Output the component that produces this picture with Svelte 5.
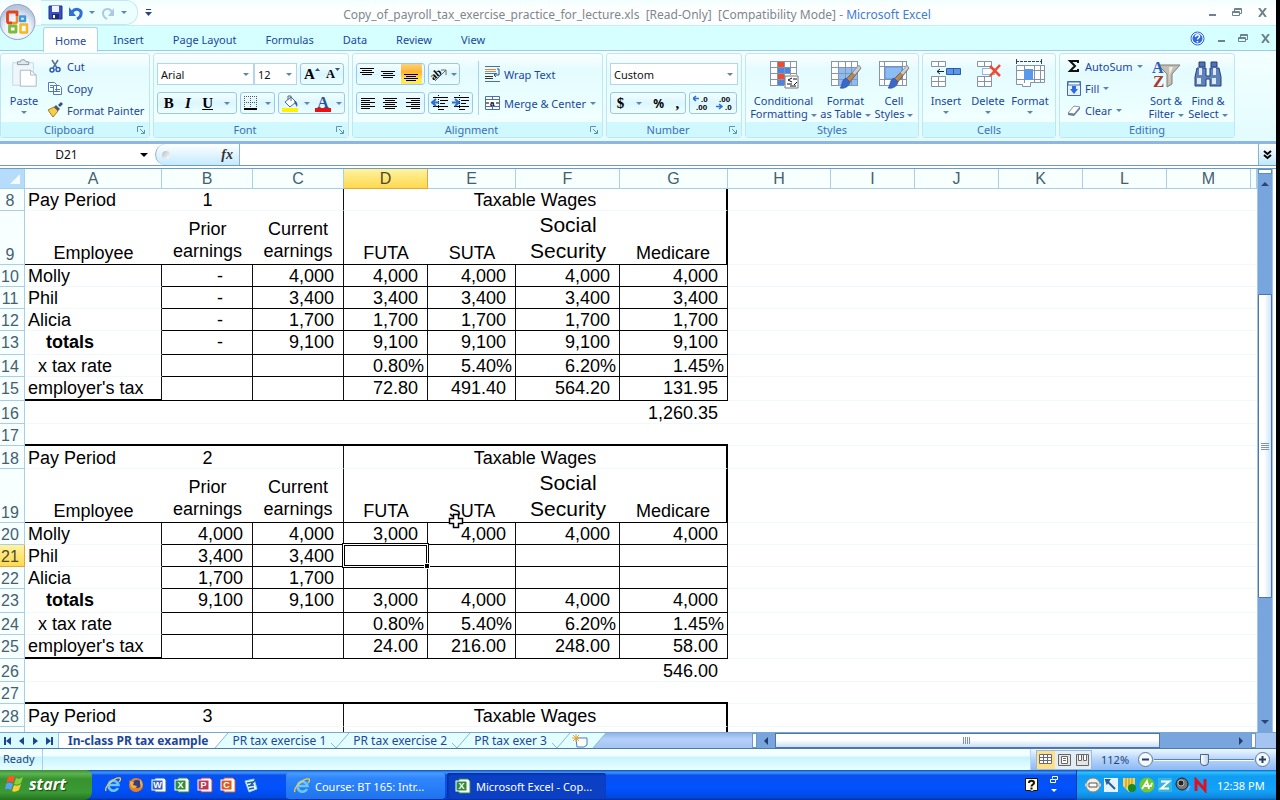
<script>
    let tabs = ["Home", "Insert", "Page Layout", "Formulas", "Data", "Review", "View"];
    let columns = ["A", "B", "C", "D", "E", "F", "G", "H", "I", "J", "K", "L", "M"];
    let sheets = ["PR tax exercise 1", "PR tax exercise 2", "PR tax exer 3"];
    let blank = ["", "", "", "", "", ""];

    let activeTab = "Home";
    let nameBox = "D21";
    let formula = "";
    let zoom = 50;

    // body rows of one pay period: label, style of the label, row height, B..G
    let period = (start, number, rows) => [
        { n: start, kind: "title", h: start === 8 ? 22 : 23, number },
        { n: start + 1, kind: "heads", h: 54 },
        ...rows.map((cells, i) => ({
            n: start + 2 + i,
            kind: "body",
            h: [22, 22, 22, 24, 22, 24][i],
            label: ["Molly", "Phil", "Alicia", "totals", "x tax rate", "employer's tax"][i],
            cls: ["", "", "", "totals", "rate", "last"][i],
            cells
        }))
    ];

    let rows = [
        ...period(8, "1", [
            ["-", "4,000", "4,000", "4,000", "4,000", "4,000"],
            ["-", "3,400", "3,400", "3,400", "3,400", "3,400"],
            ["-", "1,700", "1,700", "1,700", "1,700", "1,700"],
            ["-", "9,100", "9,100", "9,100", "9,100", "9,100"],
            ["", "", "0.80%", "5.40%", "6.20%", "1.45%"],
            ["", "", "72.80", "491.40", "564.20", "131.95"]
        ]),
        { n: 16, kind: "sum", h: 23, sum: "1,260.35" },
        { n: 17, kind: "gap", h: 22 },
        ...period(18, "2", [
            ["4,000", "4,000", "3,000", "4,000", "4,000", "4,000"],
            ["3,400", "3,400", "", "", "", ""],
            ["1,700", "1,700", "", "", "", ""],
            ["9,100", "9,100", "3,000", "4,000", "4,000", "4,000"],
            ["", "", "0.80%", "5.40%", "6.20%", "1.45%"],
            ["", "", "24.00", "216.00", "248.00", "58.00"]
        ]),
        { n: 26, kind: "sum", h: 23, sum: "546.00" },
        { n: 27, kind: "gap", h: 22 },
        { n: 28, kind: "title", h: 23, number: "3" },
        { n: "", kind: "rest", h: 54 }
    ];
</script>

<style>
    :global(body) {
        background: #000;
        overflow: hidden;
    }

    .screen {
        display: flex;
        flex-direction: column;
        height: 100vh;
        margin-right: 4px;
        background: #fff;
        font-family: "Noto Sans", "Open Sans", sans-serif;
        font-size: 11px;
        color: #1b479c;
        white-space: nowrap;
    }

    button, input, select {
        font: inherit;
        color: inherit;
        background: none;
        border: 0;
        padding: 0;
        margin: 0;
        min-width: 0;
        outline: 0;
        appearance: none;
    }

    svg {
        display: block;
        flex: none;
    }

    .dd {
        display: inline-block;
        flex: none;
        width: 0;
        border: 3px solid transparent;
        border-top-color: #5c85b3;
        border-bottom: 0;
    }

    /* title bar */
    .titlebar {
        display: flex;
        align-items: center;
        height: 25px;
        background: linear-gradient(#f2ffff, #fff 40%, #fbffff);
        border-bottom: 1px solid #c9ecf5;
    }

    .orb {
        position: absolute;
        left: 0;
        top: 3px;
        z-index: 2;
    }

    .quick {
        display: flex;
        align-items: center;
        gap: 6px;
        width: 89px;
        height: 23px;
        margin-left: 41px;
        padding-left: 7px;
        border: 1px solid #c3e8f4;
        border-left: 0;
        border-radius: 0 12px 12px 0;
        background: #ecffff;
    }

    .more {
        margin-left: 7px;
    }

    .title {
        flex: 1;
        text-align: center;
        color: #80868e;
        font-size: 12px;
        white-space: pre;
        padding: 4px 86px 0 0;
    }

    .title span {
        color: #3f7cd2;
    }

    .winbtns {
        display: flex;
        align-items: center;
        gap: 15px;
        padding-right: 8px;
    }

    /* ribbon */
    .tabs {
        display: flex;
        align-items: stretch;
        height: 25px;
        padding-left: 43px;
        background: #d6ffff;
        border-bottom: 1px solid #9fc9ea;
        box-sizing: border-box;
    }

    .tabs button {
        padding: 2px 14px 0 15px;
        height: 25px;
    }

    .tabs button.active {
        position: relative;
        top: 1px;
        padding: 0 11px;
        background: #fff;
        border: 1px solid #a8d4ee;
        border-bottom: 0;
        border-radius: 3px 3px 0 0;
    }

    .tabs .winbtns {
        margin-left: auto;
        padding-right: 5px;
        gap: 12px;
    }

    .tabs .winbtns button {
        padding: 0;
        height: auto;
    }

    .ribbon {
        display: flex;
        gap: 3px;
        padding: 2px 0 3px;
        background: linear-gradient(#f3ffff, #e3fcff);
        border-bottom: 3px solid #8fb6e0;
    }

    .group {
        display: flex;
        flex-direction: column;
        width: var(--w);
        height: 85px;
        box-sizing: border-box;
        border: 1px solid #bfe6f3;
        border-radius: 3px;
        background: linear-gradient(#fafeff, #e4fbff 20%, #eaffff 60%, #fafeff);
    }

    .group .body {
        flex: 1;
        display: flex;
    }

    .group > .rows {
        flex: 1;
    }

    .group footer {
        display: flex;
        align-items: center;
        height: 15px;
        color: #3e6fb5;
        background: #cff8ff;
    }

    .group footer span {
        flex: 1;
        text-align: center;
    }

    .group footer svg {
        margin-right: 4px;
    }

    .small {
        display: flex;
        flex-direction: column;
        gap: 6px;
        padding-top: 4px;
    }

    .small button, .inline {
        display: flex;
        align-items: center;
        gap: 4px;
        height: 16px;
    }

    .small.tools {
        width: 78px;
        padding-left: 7px;
    }

    .line .inline {
        height: 22px;
    }

    .big {
        display: flex;
        flex-direction: column;
        align-items: center;
        line-height: 13px;
        padding-top: 5px;
        width: var(--w);
    }

    .big svg {
        margin-bottom: 5px;
        height: 30px;
    }

    .big .dd {
        margin-left: 3px;
        vertical-align: middle;
    }

    .big > .dd {
        margin: 4px 0 0;
    }

    .rows {
        display: flex;
        flex-direction: column;
        gap: 7px;
        padding: 9px 3px 0;
    }

    .line {
        display: flex;
        gap: 3px;
        height: 22px;
    }

    .set {
        display: flex;
        align-items: center;
        justify-content: space-around;
        box-sizing: border-box;
        width: var(--w);
        border: 1px solid #9fc6e8;
        border-radius: 3px;
        background: linear-gradient(#f2ffff, #dcf6ff 50%, #ecffff);
    }

    .set button {
        display: flex;
        align-items: center;
        justify-content: center;
        height: 20px;
    }

    .set .on {
        width: 21px;
        background: linear-gradient(#fbd27a, #ffb42e 40%, #ffea55 80%);
    }

    .serif {
        font-family: "Liberation Serif", serif;
        font-weight: bold;
        font-size: 15px;
        color: #000;
    }

    .plain {
        font-family: "Noto Sans", sans-serif;
        font-size: 12px;
    }

    .combo {
        display: flex;
        align-items: center;
        box-sizing: border-box;
        width: var(--w);
        padding: 0 4px 0 3px;
        border: 1px solid #b4d6ec;
        background: #fff;
        color: #111;
    }

    .combo select {
        flex: 1;
    }

    .tight {
        gap: 0;
    }

    .sep {
        width: 1px;
        height: 54px;
        margin: 7px 3px 0 2px;
        background: #b0cfe8;
    }

    /* formula bar */
    .formula {
        display: flex;
        height: 21px;
        color: #111;
        font-size: 12px;
        border-bottom: 1px solid #6d9cc7;
        margin-bottom: 2px;
    }

    .formula .name {
        width: 133px;
        text-align: center;
    }

    .formula .drop {
        width: 22px;
        display: flex;
        justify-content: center;
        align-items: center;
    }

    .formula .drop i {
        border: 4px solid transparent;
        border-top-color: #000;
        border-bottom: 0;
    }

    .fx {
        display: flex;
        align-items: center;
        justify-content: space-between;
        width: 85px;
        box-sizing: border-box;
        padding: 0 6px;
        border: 1px solid #86b2d8;
        border-radius: 11px 0 0 11px;
        border-width: 0 1px 0 1px;
        background: linear-gradient(#fff, #c3eaff);
        font: italic bold 14px "Liberation Serif", serif;
        color: #333;
    }

    .fx i {
        width: 8px;
        height: 8px;
        border-radius: 4px;
        background: linear-gradient(135deg, #b8bec4, #fff);
    }

    .formula .value {
        flex: 1;
        padding: 0 4px;
    }

    .expand {
        width: 18px;
        display: flex;
        align-items: center;
        justify-content: center;
        border-left: 1px solid #86b2d8;
        background: linear-gradient(#fff, #bfe9fb);
    }

    /* sheet */
    .work {
        flex: 1;
        min-height: 0;
        display: flex;
        border-top: 1px solid #6d9cc7;
    }

    .sheet {
        flex: 1;
        overflow: hidden;
    }

    table {
        width: 100%;
        table-layout: fixed;
        border-collapse: separate;
        border-spacing: 0;
        font: 18px/20px "Liberation Sans", Arial, sans-serif;
        color: #000;
    }

    .c-n { width: 25px; }
    .c-A { width: 137px; }
    .c-B, .c-C { width: 91px; }
    .c-D, .c-I, .c-J, .c-K, .c-L, .c-M { width: 84px; }
    .c-E { width: 88px; }
    .c-F { width: 104px; }
    .c-G { width: 108px; }
    .c-H { width: 103px; }

    tr {
        height: var(--h);
    }

    th {
        padding: 0;
        box-sizing: border-box;
        border-right: 1px solid #a9cfe4;
        border-bottom: 1px solid #a9cfe4;
        font-size: 16px;
        font-weight: normal;
        color: #44606f;
        background: #f7ffff;
    }

    thead tr {
        height: 20px;
    }

    thead th {
        line-height: 19px;
    }

    tbody th {
        vertical-align: bottom;
        padding-right: 4px;
        line-height: 19px;
    }

    th.sel {
        background: linear-gradient(#fff3a0, #ffd94f);
        border-color: #e0a83c;
        color: #4d4a2c;
    }

    th.corner {
        background: #b5dcfa;
    }

    th.corner svg {
        margin-left: 9px;
    }

    td {
        position: relative;
        box-sizing: border-box;
        padding: 0;
        border: 0 solid #111;
        border-bottom: 1px solid #f1f9fc;
        vertical-align: bottom;
        text-align: right;
    }

    td.a {
        text-align: left;
        padding-left: 3px;
    }

    td.mid {
        text-align: center;
        padding-left: 0;
    }

    td.cut, .body-row td.a, td.box {
        border-right-width: 1px;
    }

    td.box {
        padding-right: 9px;
        border-bottom-color: #000;
    }

    .rate td.box {
        padding-right: 3px;
    }

    td.dash {
        padding-right: 29px;
    }

    td.edge {
        border-right: 2px solid #000;
    }

    td.under {
        border-bottom-color: #000;
        padding-bottom: 1px;
    }

    td.lift {
        padding-bottom: 2px;
        line-height: 22px;
    }

    td.large {
        font-size: 21px;
        line-height: 26px;
        padding-bottom: 0;
    }

    .totals td.a {
        font-weight: bold;
        padding-left: 21px;
    }

    .totals td, .last td, .totals th, .last th {
        padding-bottom: 2px;
    }

    .rate td.a {
        padding-left: 13px;
    }

    td.thick, .last td.a {
        border-bottom: 2px solid #000;
    }

    .last td.a {
        padding-bottom: 1px;
    }

    td.sum {
        padding-right: 10px;
    }

    .cursor-cell {
        position: absolute;
        left: -2px;
        top: -2px;
        right: -2px;
        bottom: -2px;
        z-index: 1;
        border: 3px double #000;
        background: #fff;
    }

    .cursor-cell::after {
        content: "";
        position: absolute;
        right: -4px;
        bottom: -4px;
        width: 4px;
        height: 4px;
        background: #000;
        border: 1px solid #fff;
    }

    .pointer {
        position: absolute;
        left: 20px;
        top: -10px;
        z-index: 1;
    }

    .vscroll {
        display: flex;
        flex-direction: column;
        align-items: center;
        width: 14px;
        margin-right: 3px;
        border: solid #9dc8ea;
        border-width: 0 1px;
        background: #79a5de;
    }

    .split {
        width: 12px;
        height: 3px;
        border: 1px solid #5d8fc4;
        background: #fff;
    }

    .vthumb {
        width: 12px;
        height: 302px;
        margin-top: 108px;
        border: 1px solid #4f74a8;
        border-radius: 1px;
        background: linear-gradient(90deg, #fff 40%, #cfe6fa);
        display: flex;
        align-items: center;
        justify-content: center;
    }

    .up, .down {
        border: 4px solid transparent;
    }

    .up {
        border-bottom-color: #2b4673;
        border-top: 0;
        margin-top: 8px;
    }

    .down {
        border-top-color: #2b4673;
        border-bottom: 0;
        margin: auto 0 8px;
    }

    /* sheet tabs */
    .sheets {
        display: flex;
        height: 15px;
        line-height: 15px;
        font-size: 12px;
        border-top: 1px solid #7ba6d0;
        border-bottom: 1px solid #4f79ab;
        background: linear-gradient(#8db4ea, #b5d0fa 40%, #a5c4f1);
    }

    .nav {
        display: flex;
        align-items: center;
        justify-content: space-around;
        width: 58px;
        background: #d9fbff;
        border-right: 1px solid #9cc5e3;
    }

    .sheets > button {
        background: #e2feff;
        height: 15px;
    }

    .sheets .current {
        padding: 0 7px 0 9px;
        background: #fff;
        font-weight: bold;
    }

    .slant {
        background: #e2feff;
    }

    .hscroll {
        flex: 1;
        display: flex;
        align-items: center;
        margin-left: auto;
        max-width: 524px;
        background: #79a5de;
    }

    .grip {
        width: 3px;
        height: 13px;
        border: 1px solid #6b98c8;
        background: #fff;
    }

    .left, .right {
        border: 4px solid transparent;
    }

    .left {
        border-right-color: #243d68;
        border-left: 0;
        margin: 0 7px;
    }

    .right {
        border-left-color: #243d68;
        border-right: 0;
        margin: 0 8px 0 auto;
    }

    .hthumb {
        display: flex;
        align-items: center;
        justify-content: center;
        width: 73%;
        height: 13px;
        border: 1px solid #4f74a8;
        background: linear-gradient(#fff 45%, #c9dff5);
    }

    .end {
        width: 20px;
        height: 15px;
        background: #a5c4f1;
    }

    /* status bar */
    .status {
        display: flex;
        height: 21px;
        line-height: 20px;
        color: #23457c;
        background: linear-gradient(#f4ffff, #f4ffff 30%, #c8f4ff 40%, #e8ffff);
    }

    .ready {
        width: 39px;
        padding-left: 3px;
        border-right: 1px solid #a9d0e6;
    }

    .zoombar {
        display: flex;
        align-items: center;
        width: 246px;
        margin-left: auto;
        box-sizing: border-box;
        padding: 0 5px;
        border-left: 1px solid #b7d6ee;
        background: linear-gradient(#eef8ff, #b3d3fb 50%, #8eb9f2);
    }

    .views {
        display: flex;
        height: 18px;
        border: 1px solid #9dbbd8;
        background: #e3edf5;
        margin-right: 9px;
    }

    .views button {
        display: flex;
        align-items: center;
        justify-content: center;
        width: 18px;
    }

    .views .on {
        background: #ffe08a;
    }

    .percent {
        width: 36px;
        text-align: left;
    }

    .slider {
        flex: 1;
        height: 16px;
    }

    .slider::-webkit-slider-runnable-track {
        height: 2px;
        background: linear-gradient(#5b83b5 50%, #fff 50%);
    }

    .slider::-webkit-slider-thumb {
        appearance: none;
        width: 9px;
        height: 12px;
        margin-top: -5px;
        border: 1px solid #47678f;
        border-radius: 1px 1px 5px 5px;
        background: linear-gradient(90deg, #fff, #bcd2ea);
    }

    /* taskbar */
    .taskbar {
        display: flex;
        align-items: stretch;
        height: 30px;
        background: linear-gradient(#1450b8, #3a93ff 8%, #0a50ee 18%, #0052ff 60%, #0048e0 92%, #0a2c9c);
        color: #fff;
    }

    .start {
        display: flex;
        align-items: center;
        gap: 4px;
        width: 92px;
        padding: 0 0 2px 5px;
        border-radius: 0 6px 8px 0;
        background: linear-gradient(#3f8a3c, #5cb550 12%, #37932f 30%, #3a9a34 75%, #23711f);
        font: italic bold 16px/22px "Open Sans", sans-serif;
        text-shadow: 1px 1px 1px #134a10;
    }

    .launch {
        display: flex;
        align-items: center;
        gap: 7px;
        width: 181px;
        padding-left: 13px;
    }

    .task {
        display: flex;
        align-items: center;
        gap: 5px;
        width: 159px;
        height: 26px;
        box-sizing: border-box;
        margin: 3px 2px 0 0;
        padding-left: 8px;
        border-radius: 3px;
        background: linear-gradient(#4a9cff, #2f86fb 20%, #1f74ee);
    }

    .task.pressed {
        background: #0b3fc4;
        box-shadow: inset 1px 1px 2px #062886;
    }

    .help {
        display: flex;
        align-items: center;
        gap: 10px;
        margin-left: auto;
        padding-right: 17px;
    }

    .tray {
        display: flex;
        align-items: center;
        gap: 2px;
        width: 200px;
        box-sizing: border-box;
        padding-left: 8px;
        border-left: 1px solid #0a3a9c;
        background: linear-gradient(#0d66c8, #2fc0ff 8%, #109cf3 20%, #12a2f8 70%, #0f86dc 92%, #0b5fae);
    }

    .tray time {
        margin-left: 6px;
    }
</style>

{#snippet launcher()}
    <svg width="8" height="8" viewBox="0 0 8 8" fill="none" stroke="#5e8fb8"><path d="M.5 6V.5H6M3 3l4 4M7.500 4v3.500H4" /></svg>
{/snippet}

{#snippet windowButtons()}
    <button aria-label="Minimize"><svg width="9" height="9"><rect x="1" y="6" width="7" height="2" fill="#6f8090" /></svg></button>
    <button aria-label="Restore"><svg width="11" height="9" fill="none" stroke="#6f8090"><path d="M2.500 3V.5h7v5H8M2.500 1.500h7" /><path d="M.5 3.500h7v4h-7zM.5 4.500h7" /></svg></button>
    <button aria-label="Close"><svg width="10" height="9" stroke="#6f8090" stroke-width="2"><path d="M1 0l7 9M8 0L1 9" /></svg></button>
{/snippet}

{#snippet lines(list, top = 4)}
    <svg width="16" height="17" stroke="#000">
        {#each list as [x, w], i}
            <path d="M{x} {top + i * 2 + 0.5}h{w}" />
        {/each}
    </svg>
{/snippet}

{#snippet indent(dir)}
    <svg width="18" height="16" stroke="#000" fill="none">
        <path d="M2 2.500h15M9 5.500h8M9 8.500h5M2 11.500h15M8 14.500h5" />
        <path d="M7.500 0v16" stroke-dasharray="1 1" />
        {#if dir === "out"}
            <path d="M8 7.500H2M5 4L1 7.500 5 11" stroke="#2e6fd0" stroke-width="2" />
        {:else}
            <path d="M0 7.500h6M3 4l4 3.500L3 11" stroke="#2e6fd0" stroke-width="2" />
        {/if}
    </svg>
{/snippet}

{#snippet brush()}
    <path d="M30 7l2 2-11 14-4-3z" fill="#b98756" stroke="#5f4a3a" stroke-width=".7" />
    <path d="M30 6l2 3-6 7-3-2z" fill="#c9cdd2" stroke="#666" stroke-width=".5" />
    <path d="M17 19l4 4c-1 5-6 7-10 6 3-3 1-8 6-10z" fill="#3a68c8" stroke="#244a94" stroke-width=".6" />
{/snippet}

{#snippet ie()}
    <svg width="16" height="16" viewBox="0 0 16 16" fill="none">
        <path d="M13 11a5 5 0 1 1 .5-3H4" stroke="#6cc5ff" stroke-width="2.600" />
        <path d="M1 14C-1 10 9 0 15 1c1 1 0 3-1 4" stroke="#f5cf3c" stroke-width="1.300" />
    </svg>
{/snippet}

{#snippet office(letter, color)}
    <svg width="16" height="16" viewBox="0 0 16 16">
        <path d="M4 1h9l2 2v12H4z" fill="#fff" stroke={color} />
        <rect x="1" y="3" width="11" height="10" fill={color} stroke="#fff" />
        <text x="6.500" y="11" text-anchor="middle" font-size="9" font-weight="bold" font-family="Liberation Sans" fill="#fff">{letter}</text>
    </svg>
{/snippet}

<div class="screen">
    <header class="titlebar">
        <svg class="orb" width="37" height="38" viewBox="0 0 37 38">
            <defs>
                <radialGradient id="orb" cx=".5" cy=".7" r=".6"><stop offset="0" stop-color="#fff" /><stop offset=".6" stop-color="#eaf2fa" /><stop offset="1" stop-color="#b9c6dc" /></radialGradient>
            </defs>
            <circle cx="17.500" cy="19" r="17.500" fill="url(#orb)" stroke="#8fa3c8" />
            <g fill="none" stroke-linejoin="round">
                <path d="M17 13V9H8.500l-1 1v9l1 1H12" stroke="#e2431d" stroke-width="2.800" />
                <path d="M12 20h4l1-1v-6" stroke="#f58a2c" stroke-width="2.500" />
                <path d="M20 18v-4.500h5V18z" stroke="#3e9ade" stroke-width="2.500" />
                <path d="M16 23H9.500v6H16z" stroke="#7dbb3a" stroke-width="2.800" />
                <path d="M20.500 21.500v8h6.500v-8z" stroke="#f5b81f" stroke-width="2.500" />
            </g>
        </svg>
        <div class="quick">
            <button aria-label="Save"><svg width="15" height="15"><path d="M1 1h13v13H1z" fill="#3a4fc0" stroke="#26318c" /><path d="M4 1h7v6H4z" fill="#eef4ff" /><path d="M4 9h7v5H4z" fill="#1f2c70" /><path d="M5 10h2v3H5z" fill="#fff" /></svg></button>
            <button aria-label="Undo"><svg width="14" height="14" fill="none"><path d="M3 6c4-5 10-2 9 2 0 2-2 4-4 5" stroke="#2f6fd8" stroke-width="3" /><path d="M0 1v9h7z" fill="#2f6fd8" /></svg></button>
            <i class="dd"></i>
            <button aria-label="Redo"><svg width="14" height="14" fill="none"><path d="M11 6C8 1 2 3 2 7c0 3 2 5 4 6" stroke="#aac9e4" stroke-width="2" /><path d="M13 2v8H7z" fill="#aac9e4" /></svg></button>
            <i class="dd"></i>
        </div>
        <svg class="more" width="7" height="8" fill="#26467e"><path d="M1 0h5v1H1zM0 3h7L3.500 7z" /></svg>
        <div class="title">Copy_of_payroll_tax_exercise_practice_for_lecture.xls  [Read-Only]  [Compatibility Mode] - <span>Microsoft Excel</span></div>
        <div class="winbtns">{@render windowButtons()}</div>
    </header>

    <nav class="tabs">
        {#each tabs as tab}
            <button class:active={tab === activeTab} on:click={() => activeTab = tab}>{tab}</button>
        {/each}
        <div class="winbtns">
            <button aria-label="Help"><svg width="15" height="15"><circle cx="7.500" cy="7.500" r="6.500" fill="#fff" stroke="#2d62c8" /><circle cx="7.500" cy="7.500" r="5" fill="#2d6be0" /><path d="M5.500 6c0-3 4-3 4-.5 0 1.500-2 1.500-2 3M7.500 10v1.500" stroke="#fff" stroke-width="1.500" fill="none" /></svg></button>
            {@render windowButtons()}
        </div>
    </nav>

    <div class="ribbon">
        <section class="group" style="--w: 150px">
            <div class="body">
                <button class="big" style="--w: 46px">
                    <svg width="30" viewBox="0 0 30 32"><path d="M3 4h22v24H3z" fill="#eff7fb" stroke="#c5d8e4" /><path d="M8 6V3h3c0-3 6-3 6 0h3v3z" fill="#e3e8ee" stroke="#8896a8" /><path d="M11 12h11l6 5v12H11z" fill="#fff" stroke="#a4b8cc" /><path d="M22 12v5h6" fill="none" stroke="#a4b8cc" /></svg>
                    <span>Paste</span><i class="dd"></i>
                </button>
                <div class="small">
                    <button><svg width="16" height="16" fill="none" stroke="#2c5cb4" stroke-width="1.500"><path d="M5 2l5 8M11 2L6 10" stroke="#56718f" /><circle cx="5" cy="12" r="2" /><circle cx="11" cy="11.500" r="2" /></svg>Cut</button>
                    <button><svg width="16" height="16" fill="#fff" stroke="#4a7cc0"><path d="M1.500 2.500h6l2 2v7h-8zM6.500 5.500h6l2 2v7h-8z" /><path d="M3 5.500h3M3 7.500h3M8 9.500h5M8 11.500h5" /></svg>Copy</button>
                    <button><svg width="16" height="16"><path d="M1 8l6-3 4 4-5 6z" fill="#f5cf4c" stroke="#a67c1c" /><path d="M7 5l2-2 4 4-2 2z" fill="#4a5a74" /><path d="M11 3l3-3 2 2-3 3z" fill="#344b90" /></svg>Format Painter</button>
                </div>
            </div>
            <footer><span>Clipboard</span>{@render launcher()}</footer>
        </section>

        <section class="group" style="--w: 196px">
            <div class="rows">
                <div class="line">
                    <div class="line tight">
                        <label class="combo" style="--w: 97px"><select aria-label="Font"><option>Arial</option></select><i class="dd"></i></label>
                        <label class="combo" style="--w: 43px"><select aria-label="Font size"><option>12</option></select><i class="dd"></i></label>
                    </div>
                    <div class="set serif" style="--w: 44px">
                        <button aria-label="Grow font">A<svg width="5" height="12"><path d="M0 3l2.500-3L5 3z" fill="#31507e" /></svg></button>
                        <button aria-label="Shrink font"><small>A</small><svg width="5" height="12"><path d="M0 0h5L2.500 3z" fill="#31507e" /></svg></button>
                    </div>
                </div>
                <div class="line">
                    <div class="set serif" style="--w: 80px"><button>B</button><button><i>I</i></button><button><u>U</u></button><i class="dd"></i></div>
                    <div class="set" style="--w: 35px">
                        <button aria-label="Borders"><svg width="14" height="14" fill="none" stroke="#555"><path d="M.5 0v12M6.500 0v12M12.500 0v12M0 .5h13M0 6.500h13" stroke-dasharray="1 1" /><path d="M0 13h13" stroke="#000" stroke-width="2" /></svg></button><i class="dd"></i>
                    </div>
                    <div class="set" style="--w: 67px">
                        <button aria-label="Fill color"><svg width="17" height="17"><path d="M3 7l6-5 5 5-6 5z" fill="#fff" stroke="#50688c" /><path d="M6 5V1h3v5" fill="none" stroke="#50688c" /><path d="M12 6c3 0 4 3 3 6-1-2-2-3-3-6z" fill="#2d5cb8" /><path d="M0 13h16v4H0z" fill="#fff200" /></svg></button><i class="dd"></i>
                        <button aria-label="Font color"><svg width="16" height="17"><text x="8" y="13" text-anchor="middle" font-size="16" font-weight="bold" font-family="Liberation Serif" fill="#2c4f9c">A</text><path d="M0 13h16v4H0z" fill="#e81010" /></svg></button><i class="dd"></i>
                    </div>
                </div>
            </div>
            <footer><span>Font</span>{@render launcher()}</footer>
        </section>

        <section class="group" style="--w: 251px">
            <div class="body">
                <div class="rows">
                    <div class="line">
                        <div class="set" style="--w: 69px">
                            <button aria-label="Top align">{@render lines([[1, 14], [3, 10], [1, 14], [3, 10]], 2)}</button>
                            <button aria-label="Middle align">{@render lines([[1, 14], [3, 10], [1, 14], [3, 10]], 5)}</button>
                            <button class="on" aria-label="Bottom align">{@render lines([[1, 14], [3, 10], [1, 14], [3, 10]], 8)}</button>
                        </div>
                        <div class="set" style="--w: 32px"><button aria-label="Orientation"><svg width="17" height="16" overflow="visible"><path d="M4 15L15 4M15 9V4h-5" fill="none" stroke="#666" /><text x="0" y="12" font-size="11" font-weight="bold" font-family="Liberation Serif" transform="rotate(-40 5 10)">ab</text></svg></button><i class="dd"></i></div>
                    </div>
                    <div class="line">
                        <div class="set" style="--w: 69px">
                            <button aria-label="Align left">{@render lines([[1, 14], [1, 9], [1, 14], [1, 9], [1, 14], [1, 9]], 3)}</button>
                            <button aria-label="Center">{@render lines([[1, 14], [3, 10], [1, 14], [3, 10], [1, 14], [3, 10]], 3)}</button>
                            <button aria-label="Align right">{@render lines([[1, 14], [6, 9], [1, 14], [6, 9], [1, 14], [6, 9]], 3)}</button>
                        </div>
                        <div class="set" style="--w: 45px"><button aria-label="Decrease indent">{@render indent("out")}</button><button aria-label="Increase indent">{@render indent("in")}</button></div>
                    </div>
                </div>
                <div class="sep"></div>
                <div class="rows">
                    <div class="line"><button class="inline"><svg width="15" height="16" fill="none"><path d="M0 .5h15M0 15.500h15M0 7.500h12" stroke="#4a6fae" /><path d="M0 3.500h11M0 5.500h11" stroke="#e08a3a" /><path d="M0 10.500h8M0 12.500h8" stroke="#333" /><path d="M12 3h2v6h-4M11 7l-2 2 2 2" stroke="#2d4f92" /></svg>Wrap Text</button></div>
                    <div class="line"><button class="inline"><svg width="15" height="14" fill="#fff" stroke="#4a6fae"><path d="M.5 .5h14v13H.5zM.5 3.500h14M.5 10.500h14M7.500 0v3M7.500 11v3" /><path d="M1 7h3M11 7h3" stroke="#000" /><text x="5" y="10" font-size="8" font-weight="bold" font-family="Liberation Sans" fill="#000" stroke="none">a</text></svg>Merge &amp; Center<i class="dd"></i></button></div>
                </div>
            </div>
            <footer><span>Alignment</span>{@render launcher()}</footer>
        </section>

        <section class="group" style="--w: 136px">
            <div class="rows">
                <div class="line"><label class="combo" style="--w: 128px"><select aria-label="Number format"><option>Custom</option></select><i class="dd"></i></label></div>
                <div class="line">
                    <div class="set serif" style="--w: 76px"><button>$</button><i class="dd"></i><button class="plain">%</button><button>,</button></div>
                    <div class="set" style="--w: 48px">
                        <button aria-label="Increase decimal"><svg width="17" height="16" font-size="8" font-weight="bold" font-family="Liberation Sans"><path d="M6 3.500H1M3 1L0 3.500 3 6" fill="none" stroke="#2e6fd0" stroke-width="1.500" /><text x="8" y="7">.0</text><text x="3" y="15">.00</text></svg></button>
                        <button aria-label="Decrease decimal"><svg width="17" height="16" font-size="8" font-weight="bold" font-family="Liberation Sans"><text x="3" y="7">.00</text><path d="M0 11.500h5M3 9l3 2.500L3 14" fill="none" stroke="#2e6fd0" stroke-width="1.500" /><text x="9" y="15">.0</text></svg></button>
                    </div>
                </div>
            </div>
            <footer><span>Number</span>{@render launcher()}</footer>
        </section>

        <section class="group" style="--w: 174px">
            <div class="body">
                <button class="big" style="--w: 75px">
                    <svg width="32" viewBox="0 0 32 30"><path d="M2 2h27v24H2z" fill="#fff" /><path d="M9 2h7v24H9z" fill="#f04a30" /><path d="M9 8h13v6H9zM9 20h7v6H9z" fill="#4a86e0" /><path d="M2 2.500h27M2 8.500h27M2 14.500h27M2 20.500h27M2 26.500h14M2.500 2v24M9.500 2v24M16.500 2v24M22.500 2v14M28.500 2v14" stroke="#8795ab" fill="none" /><path d="M17 17h13v12H17z" fill="#fff" stroke="#777" /><path d="M24 19l-4 2 4 2M19 25h5M25 20h4M26 26l3-3M22 27h6" stroke="#111" fill="none" /></svg>
                    <span>Conditional</span><span>Formatting<i class="dd"></i></span>
                </button>
                <button class="big" style="--w: 49px">
                    <svg width="34" viewBox="0 0 34 30"><path d="M2 2h27v24H2z" fill="#fff" /><path d="M9 8h20v18H9z" fill="#8cbcf4" /><path d="M2 2.500h27M2 8.500h27M2 14.500h27M2 20.500h27M2 26.500h27M2.500 2v24M9.500 2v24M16.500 2v24M22.500 2v24M28.500 2v24" stroke="#8795ab" fill="none" />{@render brush()}</svg>
                    <span>Format</span><span>as Table<i class="dd"></i></span>
                </button>
                <button class="big" style="--w: 48px">
                    <svg width="34" viewBox="0 0 34 30"><path d="M2 2h28v24H2z" fill="#fff" /><path d="M2 2.500h28M2 26.500h28M2 7.500h28M2 20.500h28M2.500 2v24M7.500 2v24M25.500 2v24M29.500 2v24" stroke="#8795ab" fill="none" /><path d="M8 8h17v12H8z" fill="#8cbcf4" stroke="#5e8fd0" />{@render brush()}</svg>
                    <span>Cell</span><span>Styles<i class="dd"></i></span>
                </button>
            </div>
            <footer><span>Styles</span></footer>
        </section>

        <section class="group" style="--w: 134px">
            <div class="body">
                <button class="big" style="--w: 46px">
                    <svg width="32" viewBox="0 0 32 30" fill="#fff" stroke="#8493a8"><path d="M1.500 2.500h14v5h-14zM8.500 2.500v5M1.500 17.500h14v5h-14zM1.500 22.500h14v5h-14zM8.500 17.500v10" /><path d="M16.500 9.500h14v6h-14zM23.500 9.500v6" fill="#5b98ec" stroke="#2d5ca8" /><path d="M14 12.500H7M10 10l-3 2.500 3 2.500" fill="none" stroke="#123" /></svg>
                    <span>Insert</span><i class="dd"></i>
                </button>
                <button class="big" style="--w: 38px">
                    <svg width="30" viewBox="0 0 30 30" fill="#fff" stroke="#8493a8"><path d="M4.500 2.500h14v5h-14zM11.500 2.500v5M4.500 17.500h14v5h-14zM4.500 22.500h14v5h-14zM11.500 17.500v10" /><path d="M9.500 9.500h12v6h-12z" stroke="#3a6cc0" stroke-dasharray="1 1" /><path d="M17 7l10 10M27 6L17 17" stroke="#f04a30" stroke-width="2.500" /></svg>
                    <span>Delete</span><i class="dd"></i>
                </button>
                <button class="big" style="--w: 46px">
                    <svg width="32" viewBox="0 0 32 30" fill="#fff" stroke="#8493a8"><path d="M2 2.500h26" stroke="#2d3f6c" stroke-dasharray="3 1" /><path d="M2.500 0v5M27.500 0v5" stroke="#2d3f6c" /><path d="M2.500 6.500h28v17h-14v4h-8v-2h-6z" /><path d="M2 11.500h29M2 20.500h29M10.500 7v17M20.500 7v17M26.500 7v17" /><path d="M10 10h9v11h-9z" fill="#5b98ec" stroke="none" /></svg>
                    <span>Format</span><i class="dd"></i>
                </button>
            </div>
            <footer><span>Cells</span></footer>
        </section>

        <section class="group" style="--w: 176px">
            <div class="body">
                <div class="small tools">
                    <button><svg width="14" height="16"><path d="M11 5V3H3l5 5-5 5h8v-2" fill="none" stroke="#111" stroke-width="2" /></svg>AutoSum<i class="dd"></i></button>
                    <button><svg width="14" height="16"><path d="M.5 1.500h13v14H.5z" fill="#e5f2ff" stroke="#3d6db4" /><path d="M1 2h12v3H1z" fill="#fff" stroke="#3d6db4" /><path d="M5 6h4v3h2l-4 5-4-5h2z" fill="#2d6be0" /></svg>Fill<i class="dd"></i></button>
                    <button><svg width="14" height="14"><path d="M1 10l6-7 6 1-6 7z" fill="#fff" stroke="#8493a8" /><path d="M1 10l6 1 6-7v2l-6 7-6-1z" fill="#6c7c94" /></svg>Clear<i class="dd"></i></button>
                </div>
                <button class="big" style="--w: 42px">
                    <svg width="32" viewBox="0 0 32 30"><path d="M8 6h22l-8 9v10l-5 3V15z" fill="#c4bfb4" stroke="#817c74" /><path d="M19 8h4l-3 7v10" fill="#f0ece4" /><text x="2" y="14" font-size="16" font-weight="bold" font-family="Liberation Serif" fill="#2c5cb8">A</text><text x="3" y="28" font-size="17" font-weight="bold" font-family="Liberation Serif" fill="#a83a30">Z</text></svg>
                    <span>Sort &amp;</span><span>Filter<i class="dd"></i></span>
                </button>
                <button class="big" style="--w: 42px">
                    <svg width="30" viewBox="0 0 30 30" fill="#4d74b4" stroke="#253f78"><path d="M6 3h6v5H6zM18 3h6v5h-6z" /><path d="M4 9h9v8h4V9h9l2 9v9H17v-7h-4v7H2v-9z" fill="#5e83bc" /><path d="M4 19h4v6H4zM19 19h4v6h-4zM6 9h3v7H6zM20 9h3v7h-3z" fill="#dfeaf8" stroke="none" /></svg>
                    <span>Find &amp;</span><span>Select<i class="dd"></i></span>
                </button>
            </div>
            <footer><span>Editing</span></footer>
        </section>
    </div>

    <div class="formula">
        <input class="name" aria-label="Name box" bind:value={nameBox} />
        <button class="drop" aria-label="Names"><i></i></button>
        <button class="fx" aria-label="Insert function"><i></i>fx</button>
        <input class="value" aria-label="Formula" bind:value={formula} />
        <button class="expand" aria-label="Expand formula bar"><svg width="9" height="10" fill="none" stroke="#000" stroke-width="2"><path d="M1 1l3.500 3L8 1M1 5l3.500 3L8 5" /></svg></button>
    </div>

    <main class="work">
        <div class="sheet">
            <table>
                <colgroup>
                    <col class="c-n" />
                    <col class="c-A" /><col class="c-B" /><col class="c-C" /><col class="c-D" />
                    <col class="c-E" /><col class="c-F" /><col class="c-G" /><col class="c-H" />
                    <col class="c-I" /><col class="c-J" /><col class="c-K" /><col class="c-L" /><col class="c-M" />
                    <col />
                </colgroup>
                <thead>
                    <tr>
                        <th class="corner"><svg width="12" height="12"><path d="M11 1v10H1z" fill="#f4fbff" /></svg></th>
                        {#each columns as column}
                            <th class:sel={column === "D"}>{column}</th>
                        {/each}
                        <th></th>
                    </tr>
                </thead>
                <tbody>
                    {#each rows as row}
                        <tr class={row.cls || ""} class:body-row={row.kind === "body"} style="--h: {row.h}px">
                            <th class:sel={row.n === 21}>{row.n}</th>
                            {#if row.kind === "title"}
                                <td class="a">Pay Period</td>
                                <td class="mid">{row.number}</td>
                                <td class="cut"></td>
                                <td class="mid edge" colspan="4">Taxable Wages</td>
                            {:else if row.kind === "heads"}
                                <td class="a mid under">Employee</td>
                                <td class="mid under lift">Prior<br />earnings</td>
                                <td class="mid under lift cut">Current<br />earnings</td>
                                <td class="mid under">FUTA</td>
                                <td class="mid under">SUTA</td>
                                <td class="mid under large">Social<br />Security</td>
                                <td class="mid under edge">Medicare</td>
                            {:else if row.kind === "body"}
                                <td class="a">{row.label}</td>
                                {#each row.cells as cell, i}
                                    <td class="box" class:dash={cell === "-"}>
                                        {cell}
                                        {#if row.n === 21 && i === 2}<div class="cursor-cell"></div>{/if}
                                        {#if row.n === 20 && i === 3}
                                            <svg class="pointer" width="16" height="16"><path d="M5.500 1.500h5v4h4v5h-4v4h-5v-4h-4v-5h4z" fill="#fff" stroke="#000" stroke-width="1.500" /></svg>
                                        {/if}
                                    </td>
                                {/each}
                            {:else}
                                {#each blank as _, i}
                                    <td class:thick={row.kind === "gap"} class:cut={row.kind === "rest" && i === 2}></td>
                                {/each}
                                <td class="sum" class:thick={row.kind === "gap"} class:edge={row.kind === "rest"}>{row.sum || ""}</td>
                            {/if}
                            {#each columns.slice(7) as _}<td></td>{/each}
                            <td></td>
                        </tr>
                    {/each}
                </tbody>
            </table>
        </div>
        <div class="vscroll">
            <div class="split"></div>
            <i class="up"></i>
            <div class="vthumb"><svg width="8" height="7" stroke="#7d93ad"><path d="M0 .5h8M0 2.500h8M0 4.500h8M0 6.500h8" /></svg></div>
            <i class="down"></i>
        </div>
    </main>

    <div class="sheets">
        <div class="nav">
            <button aria-label="First sheet"><svg width="8" height="8" fill="#1c4690"><path d="M0 0h2v8H0zM7 0v8L2 4z" /></svg></button>
            <button aria-label="Previous sheet"><svg width="6" height="8" fill="#1c4690"><path d="M5 0v8L0 4z" /></svg></button>
            <button aria-label="Next sheet"><svg width="6" height="8" fill="#1c4690"><path d="M0 0v8l5-4z" /></svg></button>
            <button aria-label="Last sheet"><svg width="8" height="8" fill="#1c4690"><path d="M5 0h2v8H5zM0 0v8l5-4z" /></svg></button>
        </div>
        <button class="current">In-class PR tax example</button>
        {#each sheets as sheet, i}
            <svg class="slant" width="17" height="15"><path d="M0 15L13 0H0z" fill={i ? "#e2feff" : "#fff"} /><path d="M0 15L13 0" stroke="#8ab4da" /></svg>
            <button>{sheet}</button>
            <svg class="slant" width="10" height="15"><path d="M5 10l5 5" stroke="#8ab4da" /></svg>
        {/each}
        <svg class="slant" width="15" height="15"><path d="M0 15L13 0" stroke="#8ab4da" /></svg>
        <button aria-label="Insert worksheet"><svg width="16" height="14" fill="none"><path d="M4 4h11v7l-3 2H5z" fill="#fff" stroke="#4a7cc0" /><path d="M4 0v8M0 4h8M1 1l6 6M7 1L1 7" stroke="#eda428" /></svg></button>
        <svg width="18" height="15"><path d="M0 0h18L5 15H0z" fill="#e2feff" /><path d="M5 15L18 0" stroke="#8ab4da" /></svg>
        <div class="hscroll">
            <div class="grip"></div>
            <i class="left"></i>
            <div class="hthumb"><svg width="8" height="7" stroke="#7d93ad"><path d="M.5 0v7M2.500 0v7M4.500 0v7M6.500 0v7" /></svg></div>
            <i class="right"></i>
            <div class="grip"></div>
            <div class="end"></div>
        </div>
    </div>

    <div class="status">
        <div class="ready">Ready</div>
        <div class="zoombar">
            <div class="views">
                <button class="on" aria-label="Normal"><svg width="14" height="11" fill="#fff" stroke="#6b6b6b"><path d="M.5 .5h12v9H.5zM4.500 0v10M8.500 0v10M0 3.500h13M0 6.500h13" /></svg></button>
                <button aria-label="Page layout"><svg width="13" height="12" fill="#e5e5e5" stroke="#666"><path d="M.5 .5h12v11H.5z" /><path d="M3.500 2.500h6v7h-6zM5 4.500h3M5 6.500h3" fill="#fff" /></svg></button>
                <button aria-label="Page break preview"><svg width="13" height="12" fill="#e5e5e5" stroke="#666"><path d="M.5 .5h12v11H.5z" /><path d="M2.500 .5h3v6h-3zM7.500 .5h3v6h-3z" fill="#fff" /></svg></button>
            </div>
            <button class="percent">112%</button>
            <button aria-label="Zoom out"><svg width="17" height="17"><circle cx="8.500" cy="8.500" r="7" fill="#f4f9ff" stroke="#5a779c" /><path d="M5 8.500h7" stroke="#27405f" stroke-width="2" /></svg></button>
            <input class="slider" type="range" aria-label="Zoom" bind:value={zoom} />
            <button aria-label="Zoom in"><svg width="17" height="17"><circle cx="8.500" cy="8.500" r="7" fill="#f4f9ff" stroke="#5a779c" /><path d="M5 8.500h7M8.500 5v7" stroke="#27405f" stroke-width="2" /></svg></button>
        </div>
    </div>

    <footer class="taskbar">
        <button class="start"><svg width="20" height="18" viewBox="0 0 20 18"><path d="M3 2c3-2 5-1 7 0L8 8C6 7 4 6 1 8z" fill="#f0592a" /><path d="M11 3c2 1 4 1 7-1l-2 6c-3 2-5 2-7 1z" fill="#8ecf3c" /><path d="M1 9c3-2 5-1 7 0l-2 6c-2-1-4-2-6 0z" fill="#5aa0f5" /><path d="M9 10c2 1 4 1 7-1l-2 6c-3 2-5 2-7 1z" fill="#fbcf2e" /></svg>start</button>
        <div class="launch">
            {@render ie()}
            <svg width="16" height="16"><circle cx="8" cy="8" r="7" fill="#e8801e" /><circle cx="9" cy="7" r="4" fill="#2e3e8c" /><path d="M1 3c1 2 3 2 5 2l-1 3 4 1c-1 3-5 3-6 0zM12 2c3 3 3 7 1 9l-1-5z" fill="#f8b03a" /></svg>
            {@render office("W", "#2f5fc0")}
            {@render office("X", "#2f8c3c")}
            {@render office("P", "#b83a58")}
            {@render office("C", "#e05a20")}
            <svg width="16" height="16"><path d="M2 4l9-2 3 10-8 3z" fill="#e8f6ff" stroke="#8fd0f5" /><path d="M4 6l6-1M5 9l6-1M6 12l5-1M14 1L7 9" stroke="#1d5f9c" stroke-width="1.500" /></svg>
        </div>
        <button class="task">{@render ie()}Course: BT 165: Intr...</button>
        <button class="task pressed">{@render office("X", "#2f8c3c")}Microsoft Excel - Cop...</button>
        <div class="help">
            <svg width="14" height="14"><path d="M.5 .5h12v12H9l-2 1-2-1H.5z" fill="#fffde0" stroke="#111" /><path d="M4 5c0-3 5-3 5 0 0 1.500-2.500 1.500-2.500 3.500M6.500 9.500v2" fill="none" stroke="#111" stroke-width="2" /></svg>
            <svg width="10" height="18" fill="none" stroke="#fff"><path d="M3.500 2.500v-2h5v3h-2M1.500 3.500h5v3h-5z" /><path d="M2 13h6l-3 3z" fill="#fff" stroke="none" /></svg>
        </div>
        <div class="tray">
            <svg width="16" height="16"><circle cx="8" cy="8" r="7" fill="#f5f0e0" stroke="#888" /><path d="M4 6h8v4H4z" fill="#fff" stroke="#555" /><path d="M0 8h3M13 8h3" stroke="#ccc" stroke-width="3" /></svg>
            <svg width="16" height="16"><path d="M1 1h14v14H1z" fill="#e6f3ff" /><path d="M4 4l8 8M3 3l3 0-2 3z" stroke="#22609c" stroke-width="2" fill="none" /></svg>
            <svg width="16" height="16"><path d="M2 1h12v8l-6 6-6-6z" fill="#f2d65a" /><path d="M5 1v10M8 1v10M11 1v10" stroke="#b78d20" /><circle cx="11" cy="11" r="4" fill="#188a28" /></svg>
            <svg width="16" height="16"><circle cx="8" cy="8" r="7.500" fill="#72c82e" /><path d="M3 12l5-8 2 8M5 9h7l1-3" stroke="#fff" stroke-width="1.800" fill="none" /></svg>
            <svg width="16" height="16"><path d="M1 1h14v14H1z" fill="#35b5dc" /><path d="M4 4.500h8L4 11.500h8" stroke="#fff" stroke-width="2" fill="none" /></svg>
            <svg width="16" height="16"><circle cx="7" cy="7" r="6" fill="#777" stroke="#222" /><circle cx="6" cy="6" r="3" fill="#222" stroke="#bbb" /><path d="M12 14l3-5" stroke="#7af" stroke-width="2" /></svg>
            <svg width="16" height="16"><path d="M3 14V3l9 10V2" stroke="#e01020" stroke-width="3" fill="none" /></svg>
            <time>12:38 PM</time>
        </div>
    </footer>
</div>
